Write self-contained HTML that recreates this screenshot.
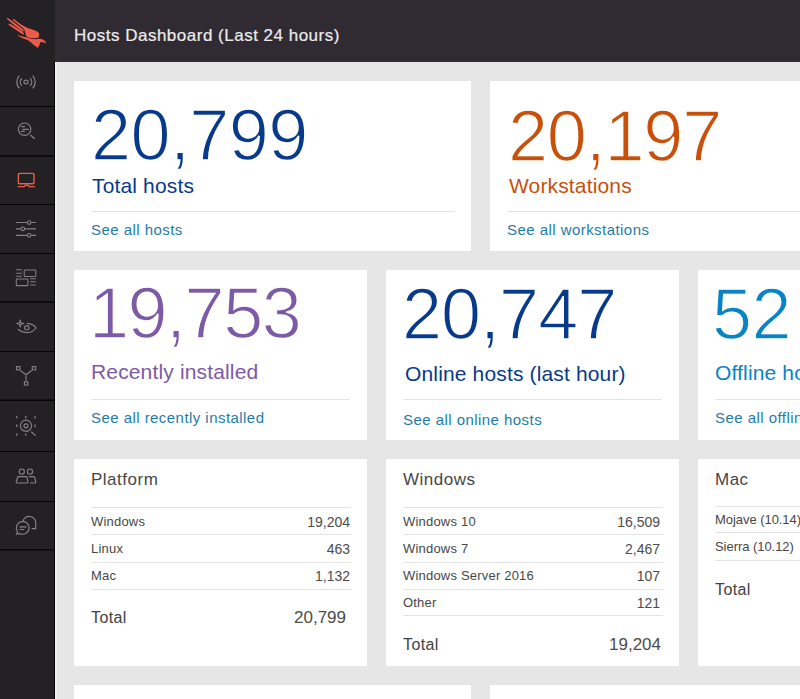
<!DOCTYPE html>
<html><head><meta charset="utf-8">
<style>
*{margin:0;padding:0;box-sizing:border-box}
html,body{width:800px;height:699px;overflow:hidden;background:#e6e6e6;font-family:"Liberation Sans",sans-serif}
#side{position:absolute;left:0;top:0;width:55px;height:699px;background:#232124}
#sideb{position:absolute;left:54px;top:62px;width:1px;height:637px;background:#080808}
#sidel{position:absolute;left:55px;top:62px;width:2px;height:637px;background:#eeeeee}
#hdr{position:absolute;left:55px;top:0;width:745px;height:62px;background:#302b32}
#title{position:absolute;left:74px;top:26px;font-size:17px;line-height:20px;color:#ececec;white-space:nowrap;letter-spacing:0.5px;-webkit-text-stroke:0.2px #ececec}
.card{position:absolute;background:#fff}
.big{position:absolute;font-size:72px;line-height:70px;white-space:nowrap;letter-spacing:-0.6px;-webkit-text-stroke:1.5px #fff}
.lab{position:absolute;font-size:21px;line-height:24px;white-space:nowrap;letter-spacing:0.15px}
.dv{position:absolute;height:1px;background:#e4e4e4}
.link{position:absolute;font-size:15px;line-height:18px;color:#1f7ca9;white-space:nowrap;letter-spacing:0.45px}
.ct{position:absolute;font-size:17px;line-height:20px;color:#474747;white-space:nowrap;letter-spacing:0.5px}
.row{position:absolute;font-size:13px;line-height:16px;color:#474747;white-space:nowrap;letter-spacing:0.2px}
.num{position:absolute;width:200px;font-size:14px;line-height:16px;color:#4c4c4c;white-space:nowrap;text-align:right}
.tot{position:absolute;font-size:16px;line-height:20px;color:#424242;white-space:nowrap;letter-spacing:0.4px}
.totn{position:absolute;width:200px;font-size:17px;line-height:20px;color:#4c4c4c;white-space:nowrap;text-align:right}
svg{position:absolute}
</style></head><body>
<div id="side"></div>
<div id="sideb"></div><div id="sidel"></div>
<div id="hdr"></div>
<div id="title">Hosts Dashboard (Last 24 hours)</div>
<svg width="54" height="699" style="left:0;top:0" viewBox="0 0 54 699">
<g fill="none" stroke="#060506" stroke-width="1.1">
<path d="M0 106.5H54M0 204.5H54M0 253.5H54M0 351.5H54M0 451.5H54M0 501.5H54"/>
<path d="M0 156H54M0 302H54M0 400.3H54M0 549.9H54" stroke-width="1.4"/>
</g>
<!-- logo -->
<g transform="translate(4 14) scale(0.0575)" fill="#f05a48">
<path d="M52,68 C62,66 72,72 82,79 C170,140 260,212 346,282 L330,312 C240,245 150,178 60,92 C50,84 46,74 52,68 Z"/>
<path d="M82,168 C92,166 100,170 110,176 C190,222 280,282 350,334 L334,362 C250,302 170,250 90,194 C80,186 76,174 82,168 Z"/>
<path d="M160,90 C170,86 180,90 190,98 C260,160 335,212 420,246 C500,270 580,290 606,330 C616,355 612,385 602,405 C560,432 480,426 420,410 C386,392 372,362 368,322 C364,292 350,262 326,242 C275,205 215,155 165,114 C155,106 152,96 160,90 Z"/>
<path d="M222,366 C290,382 370,402 440,422 C500,438 560,444 600,432 C640,422 690,440 715,470 C725,485 731,495 734,512 C702,497 657,486 626,496 C630,526 612,556 582,594 C572,570 550,556 525,546 C490,516 455,480 410,454 C340,428 270,402 222,366 Z"/>
</g>
<g fill="none" stroke="#828282" stroke-width="1.15" stroke-linecap="round">
<!-- broadcast -->
<ellipse cx="26" cy="82" rx="2.1" ry="1.9" stroke-width="1.2"/>
<path d="M21.8 78.2 A5.6 5.6 0 0 0 21.8 85.8 M30.2 78.2 A5.6 5.6 0 0 1 30.2 85.8" stroke-width="1.3" stroke-linecap="butt"/>
<path d="M19.3 75.6 A9.5 9.5 0 0 0 19.3 88.4 M32.7 75.6 A9.5 9.5 0 0 1 32.7 88.4" stroke-width="1.3" stroke-linecap="butt"/>
<!-- search lines -->
<circle cx="24.6" cy="129.2" r="6.2"/>
<path d="M30.8 135.3 L34.4 138.4" stroke-width="1.3"/>
<path d="M21.4 126.6 H24.6 M22.8 129.3 H28.5 M21.4 131.3 H24.4"/>
<!-- monitor -->
<g stroke="#e8604c" stroke-width="1.4">
<rect x="18.4" y="173.4" width="15.6" height="10.4" rx="1.2"/>
<path d="M18 186.5 H24.3 L25.2 185.3 H28.2 L29.1 186.5 H34.5" stroke-width="1.25"/>
</g>
<!-- sliders -->
<path stroke-linecap="butt" d="M16 222.5 H27.2 M31.3 222.5 H36 M16 228.8 H20.6 M24.9 228.8 H36 M16 235.3 H27.2 M31.3 235.3 H36"/>
<circle cx="29.2" cy="222.5" r="1.8"/>
<circle cx="22.8" cy="228.8" r="1.8"/>
<circle cx="29.2" cy="235.3" r="1.8"/>
<!-- layout -->
<path stroke-linecap="butt" stroke-width="1.05" d="M16.2 269.8 H21.8 M16.2 273.2 H21.8 M16.2 276.3 H21.8 M30.2 278.8 H35.8 M30.2 281.8 H35.8 M30.2 285 H35.8"/>
<rect x="24.2" y="270" width="11.6" height="6.4" rx="0.6" stroke-width="1.05"/>
<rect x="16.3" y="279" width="11.6" height="6.6" rx="0.6" stroke-width="1.05"/>
<!-- eye -->
<path d="M27.2 323.4 C31 323.6 34.5 325.5 36 328 C33.5 331.5 29.5 332.8 26.5 332.6 C23 332.5 20 331 18.3 329.4"/>
<circle cx="26.8" cy="327.8" r="2.2"/>
<path d="M20.25 320.3 V326.7 M17 323.5 H23.5" stroke="#828282" stroke-width="1.5" stroke-linecap="round"/>
<path d="M20.25 321 L22.8 323.5 L20.25 326 L17.7 323.5 Z" fill="#828282" stroke="none"/>
<circle cx="20.25" cy="323.5" r="0.75" fill="#232125" stroke="none"/>
<!-- network -->
<rect x="16.5" y="366.6" width="3.4" height="3.2"/>
<rect x="32.3" y="366.6" width="3.4" height="3.2"/>
<rect x="24.4" y="381.8" width="3.4" height="3.3"/>
<path d="M20.6 370.8 L26 374.8 L31.4 370.8 M26 374.8 V380.2"/>
<!-- target -->
<circle cx="26" cy="425.8" r="5.6"/>
<circle cx="26" cy="425.8" r="2"/>
<path d="M31.5 432 L35.3 435.4"/>
<path d="M16.8 416.3 V417.8 M25.8 416.3 V417.8 M35 416.3 V417.8 M16.8 425 V426.5 M35 425 V426.5 M16.8 433.8 V435.3 M25.8 433.8 V435.3" stroke-width="1.3"/>
<!-- users -->
<circle cx="21.8" cy="471.6" r="2.6"/>
<circle cx="30" cy="471.6" r="2.6"/>
<path d="M18.6 476.6 H26 C26.6 476.6 27 477 27.1 477.5 L28 482 C28.1 482.6 27.8 483 27.2 483 H17 C16.4 483 16.1 482.6 16.2 482 L17.5 477.5 C17.6 477 18 476.6 18.6 476.6Z"/>
<path d="M29.3 476.6 H33.6 C34.2 476.6 34.6 477 34.7 477.5 L35.8 482 C35.9 482.6 35.6 483 35 483 H30.4"/>
<!-- chat -->
<path d="M16.6 534.2 L17.5 531.5 A6.4 6.4 0 1 1 19.6 533.4 Z"/>
<path d="M20 526.8 H26.2 M20 529.5 H23.8" stroke-width="1.2"/>
<path d="M22.9 521.6 A6.5 6.5 0 0 1 35.75 523.4 V528.6 H32.2"/>
</g>
</svg>
<div class="card" style="left:74px;top:81px;width:397px;height:170px"></div>
<div class="card" style="left:490px;top:81px;width:397px;height:170px"></div>
<div class="card" style="left:74px;top:270px;width:293px;height:170px"></div>
<div class="card" style="left:386px;top:270px;width:293px;height:170px"></div>
<div class="card" style="left:698px;top:270px;width:293px;height:170px"></div>
<div class="card" style="left:74px;top:459px;width:293px;height:207px"></div>
<div class="card" style="left:386px;top:459px;width:293px;height:207px"></div>
<div class="card" style="left:698px;top:459px;width:293px;height:207px"></div>
<div class="card" style="left:74px;top:685px;width:397px;height:100px"></div>
<div class="card" style="left:490px;top:685px;width:397px;height:100px"></div>
<div class="big" style="left:91px;top:100px;color:#073a8a;letter-spacing:-0.6px">20,799</div>
<div class="big" style="left:508px;top:101px;color:#c9500a;letter-spacing:-1.2px">20,197</div>
<div class="big" style="left:89px;top:278px;color:#7d5aa6;letter-spacing:-1.5px">19,753</div>
<div class="big" style="left:402px;top:279px;color:#073a8a;letter-spacing:-1.0px">20,747</div>
<div class="big" style="left:712px;top:279px;color:#0883c8;letter-spacing:-0.6px">52</div>
<div class="lab" style="left:92px;top:174px;color:#073a8a">Total hosts</div>
<div class="lab" style="left:509px;top:174px;color:#c9500a">Workstations</div>
<div class="lab" style="left:91px;top:360px;color:#7d5aa6">Recently installed</div>
<div class="lab" style="left:405px;top:362px;color:#073a8a">Online hosts (last hour)</div>
<div class="lab" style="left:715px;top:361px;color:#0883c8">Offline hosts</div>
<div class="link" style="left:91px;top:221px">See all hosts</div>
<div class="link" style="left:507px;top:221px">See all workstations</div>
<div class="link" style="left:91px;top:409px">See all recently installed</div>
<div class="link" style="left:403px;top:411px">See all online hosts</div>
<div class="link" style="left:715px;top:409px">See all offline hosts</div>
<div class="dv" style="left:91px;top:211px;width:364px"></div>
<div class="dv" style="left:507px;top:211px;width:300px"></div>
<div class="dv" style="left:91px;top:399px;width:259px"></div>
<div class="dv" style="left:403px;top:399px;width:259px"></div>
<div class="dv" style="left:715px;top:399px;width:259px"></div>
<div class="dv" style="left:91px;top:507px;width:260px"></div>
<div class="dv" style="left:91px;top:534px;width:260px"></div>
<div class="dv" style="left:91px;top:562px;width:260px"></div>
<div class="dv" style="left:91px;top:589px;width:260px"></div>
<div class="dv" style="left:403px;top:507px;width:260px"></div>
<div class="dv" style="left:403px;top:534px;width:260px"></div>
<div class="dv" style="left:403px;top:562px;width:260px"></div>
<div class="dv" style="left:403px;top:589px;width:260px"></div>
<div class="dv" style="left:403px;top:615px;width:260px"></div>
<div class="dv" style="left:715px;top:506px;width:260px"></div>
<div class="dv" style="left:715px;top:532px;width:260px"></div>
<div class="dv" style="left:715px;top:560px;width:260px"></div>
<div class="ct" style="left:91px;top:470px">Platform</div>
<div class="ct" style="left:403px;top:470px">Windows</div>
<div class="ct" style="left:715px;top:470px">Mac</div>
<div class="row" style="left:91px;top:514px">Windows</div>
<div class="row" style="left:91px;top:541px">Linux</div>
<div class="row" style="left:91px;top:568px">Mac</div>
<div class="row" style="left:403px;top:514px">Windows 10</div>
<div class="row" style="left:403px;top:541px">Windows 7</div>
<div class="row" style="left:403px;top:568px">Windows Server 2016</div>
<div class="row" style="left:403px;top:595px">Other</div>
<div class="row" style="left:715px;top:512px;letter-spacing:-0.05px">Mojave (10.14)</div>
<div class="row" style="left:715px;top:539px;letter-spacing:-0.05px">Sierra (10.12)</div>
<div class="num" style="left:150px;top:514px">19,204</div>
<div class="num" style="left:150px;top:541px">463</div>
<div class="num" style="left:150px;top:568px">1,132</div>
<div class="num" style="left:460px;top:514px">16,509</div>
<div class="num" style="left:460px;top:541px">2,467</div>
<div class="num" style="left:460px;top:568px">107</div>
<div class="num" style="left:460px;top:595px">121</div>
<div class="tot" style="left:91px;top:608px">Total</div>
<div class="tot" style="left:403px;top:635px">Total</div>
<div class="tot" style="left:715px;top:580px">Total</div>
<div class="totn" style="left:146px;top:608px">20,799</div>
<div class="totn" style="left:461px;top:635px">19,204</div>
</body></html>
